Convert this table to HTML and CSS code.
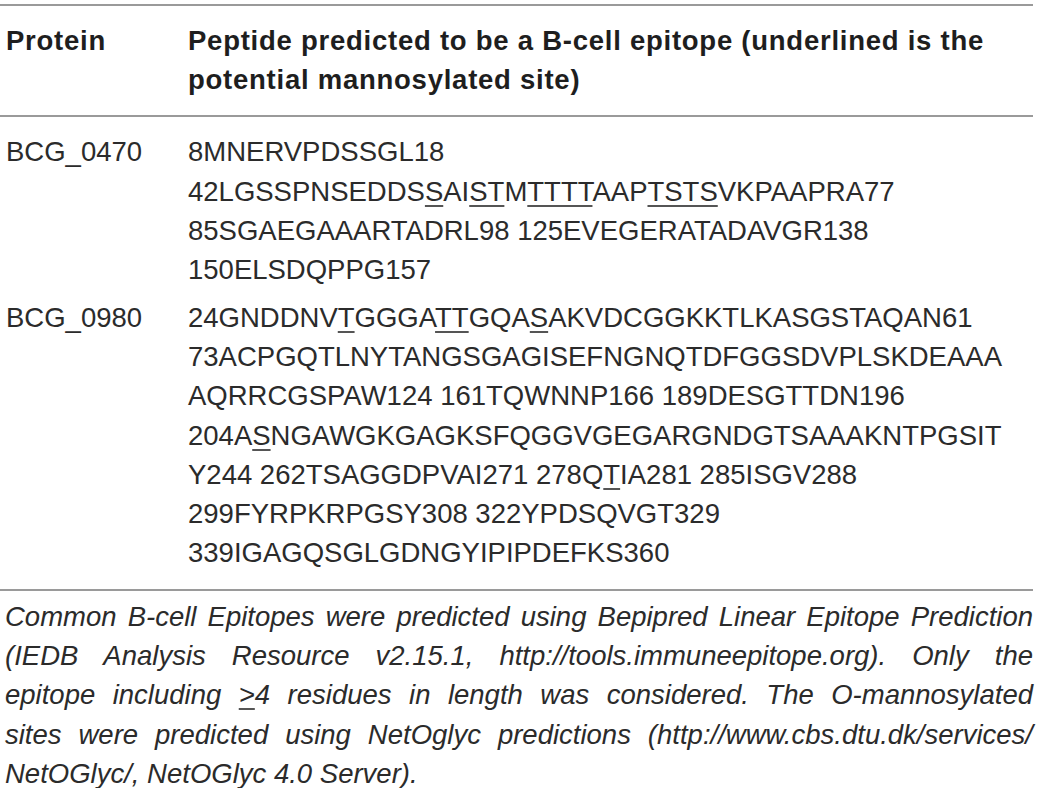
FILE: index.html
```html
<!DOCTYPE html>
<html>
<head>
<meta charset="utf-8">
<link rel="stylesheet" href="styles.css">
</head>
<body>
<div class="wrap">
  <table class="tbl">
    <thead>
      <tr>
        <th class="c1">Protein</th>
        <th class="c2">Peptide predicted to be a B-cell epitope (underlined is the potential mannosylated site)</th>
      </tr>
    </thead>
    <tbody>
      <tr class="r1">
        <td class="c1">BCG_0470</td>
        <td class="c2">
          <div class="ln">8MNERVPDSSGL18</div>
          <div class="ln">42LGSSPNSEDDS<u>S</u>AI<u>ST</u>M<u>TTTT</u>AAP<u>TSTS</u>VKPAAPRA77</div>
          <div class="ln">85SGAEGAAARTADRL98 125EVEGERATADAVGR138</div>
          <div class="ln">150ELSDQPPG157</div>
        </td>
      </tr>
      <tr class="r2">
        <td class="c1">BCG_0980</td>
        <td class="c2">
          <div class="ln">24GNDDNV<u>T</u>GGGA<u>TT</u>GQA<u>S</u>AKVDCGGKKTLKASGSTAQAN61</div>
          <div class="ln">73ACPGQTLNYTANGSGAGISEFNGNQTDFGGSDVPLSKDEAAA</div>
          <div class="ln">AQRRCGSPAW124 161TQWNNP166 189DESGTTDN196</div>
          <div class="ln">204A<u>S</u>NGAWGKGAGKSFQGGVGEGARGNDGTSAAAKNTPGSIT</div>
          <div class="ln">Y244 262TSAGGDPVAI271 278Q<u>T</u>IA281 285ISGV288</div>
          <div class="ln">299FYRPKRPGSY308 322YPDSQVGT329</div>
          <div class="ln">339IGAGQSGLGDNGYIPIPDEFKS360</div>
        </td>
      </tr>
    </tbody>
  </table>
  <div class="note">
    <div class="nl">Common B-cell Epitopes were predicted using Bepipred Linear Epitope Prediction</div>
    <div class="nl">(IEDB Analysis Resource v2.15.1, http://tools.immuneepitope.org). Only the</div>
    <div class="nl">epitope including <u>&gt;</u>4 residues in length was considered. The O-mannosylated</div>
    <div class="nl">sites were predicted using NetOglyc predictions (http://www.cbs.dtu.dk/services/</div>
    <div class="nl last">NetOGlyc/, NetOGlyc 4.0 Server).</div>
  </div>
</div>
</body>
</html>
```
FILE: styles.css
```css
html, body {
  margin: 0;
  padding: 0;
  background: #ffffff;
}

body {
  font-family: "Liberation Sans", Arial, sans-serif;
  color: #2b2b2b;
  font-size: 27.5px;
  line-height: 39.3px;
}

.wrap {
  width: 1033px;
  margin-top: 4px;
}

.tbl {
  width: 100%;
  border-collapse: collapse;
  border-top: 2px solid #9a9a9a;
  border-bottom: 2px solid #9a9a9a;
}

.tbl th,
.tbl td {
  text-align: left;
  vertical-align: top;
  padding: 0;
}

.tbl th {
  font-weight: bold;
  color: #1e1e1e;
  letter-spacing: 0.75px;
  padding-top: 15px;
  padding-bottom: 15.4px;
  border-bottom: 2px solid #9a9a9a;
}

.tbl .c1 {
  width: 188px;
  padding-left: 6px;
  box-sizing: border-box;
}

.r1 td {
  padding-top: 15.5px;
  padding-bottom: 4px;
}

.r2 td {
  padding-top: 4px;
  padding-bottom: 16px;
}

.ln {
  white-space: nowrap;
}

u {
  text-decoration-thickness: 1.5px;
  text-underline-offset: 4px;
  text-decoration-color: #555;
}

.note {
  padding: 6px 0 0 5px;
  font-style: italic;
}

.nl {
  white-space: nowrap;
  text-align: justify;
  text-align-last: justify;
}

.nl.last {
  text-align-last: left;
}
```
